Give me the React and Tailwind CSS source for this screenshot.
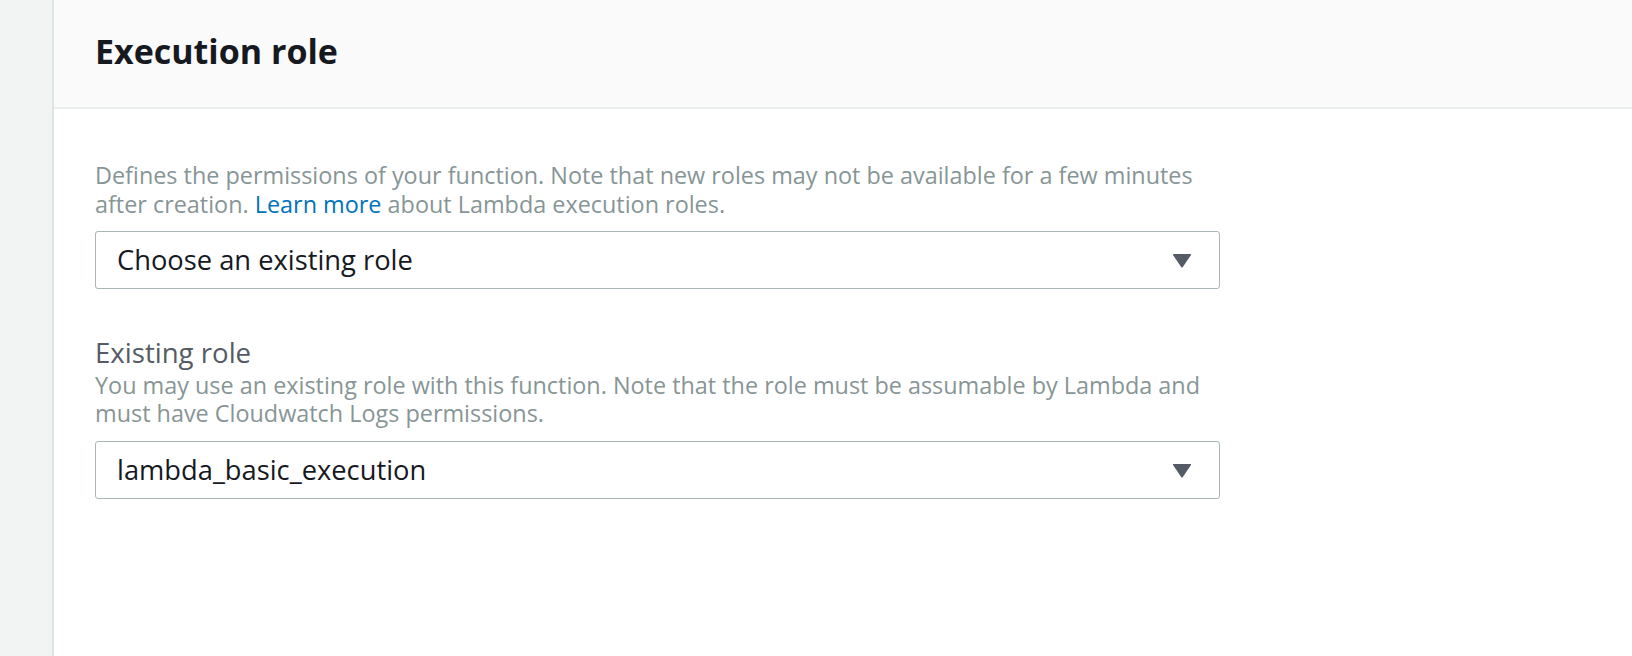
import React from "react";

function Arrow() {
  return (
    <svg width="20" height="15" viewBox="0 0 20 15" className="shrink-0">
      <path d="M1.5 1 L18.5 1 Q19.5 1 19 2 L10.8 14 Q10 15 9.2 14 L1 2 Q0.5 1 1.5 1 Z" fill="#545b64" />
    </svg>
  );
}

function Select({ value }) {
  return (
    <div className="h-[58px] w-[1125px] border border-[#aab7b8] rounded-[3px] bg-white flex items-center justify-between pl-[21px] pr-[27px]">
      <span className="text-[27.3px] text-[#16191f] leading-none">{value}</span>
      <Arrow />
    </div>
  );
}

export default function App() {
  return (
    <div className="flex min-h-[656px] w-[1632px] bg-white" style={{ fontFamily: '"Open Sans", "Noto Sans", sans-serif' }}>
      <div className="w-[54px] shrink-0 bg-[#f2f3f3] border-r-2 border-[#dfe3e3]" />
      <div className="flex-1 flex flex-col">
        <div className="h-[109px] bg-[#fafafa] border-b-2 border-[#eaeded] flex items-center pl-[41px]">
          <h1 className="text-[34px] font-bold text-[#16191f] leading-none -mt-[6px]">Execution role</h1>
        </div>
        <div className="pl-[41px] pt-[52px]">
          <p className="w-[1125px] text-[23.4px] leading-[29px] text-[#879596]">
            Defines the permissions of your function. Note that new roles may not be available for a few minutes after creation.{" "}
            <span className="text-[#0073bb]">Learn more</span> about Lambda execution roles.
          </p>
          <div className="mt-[12px]">
            <Select value="Choose an existing role" />
          </div>
          <div className="mt-[44px] text-[27.6px] leading-[38px] text-[#545b64]">Existing role</div>
          <p className="w-[1125px] text-[23.4px] leading-[28px] text-[#879596]">
            You may use an existing role with this function. Note that the role must be assumable by Lambda and must have Cloudwatch Logs permissions.
          </p>
          <div className="mt-[14px]">
            <Select value="lambda_basic_execution" />
          </div>
        </div>
      </div>
    </div>
  );
}
